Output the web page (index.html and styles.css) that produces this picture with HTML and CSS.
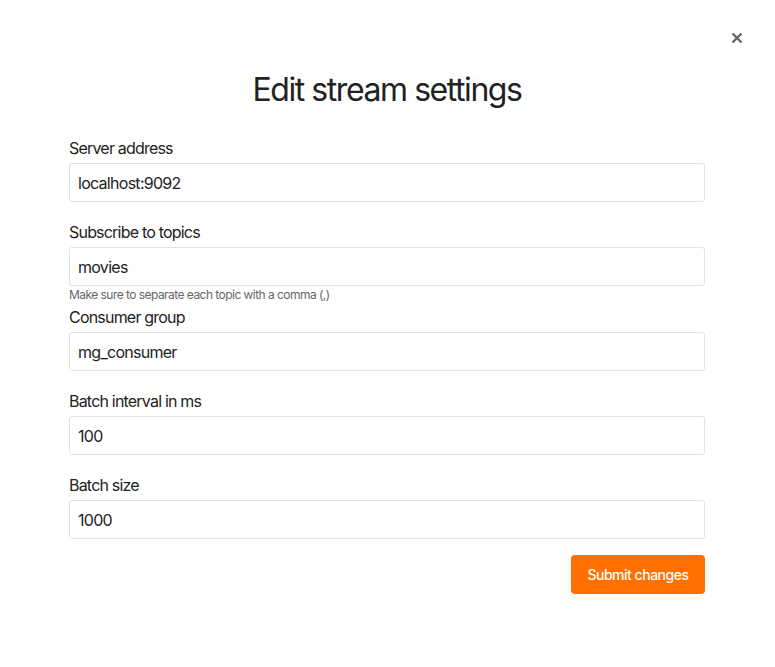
FILE: index.html
```html
<!DOCTYPE html>
<html lang="en">
<head>
<meta charset="utf-8">
<title>Edit stream settings</title>
<link rel="stylesheet" href="styles.css">
</head>
<body>
<div class="modal">
  <button class="close" aria-label="Close">
    <svg width="12" height="12" viewBox="0 0 12 12"><path d="M1.5 1.5 L10.5 10.5 M10.5 1.5 L1.5 10.5" stroke="#666" stroke-width="2.4" stroke-linecap="butt"/></svg>
  </button>
  <div class="content">
    <h1 class="title">Edit stream settings</h1>
    <form class="form">
      <div class="field">
        <label class="label">Server address</label>
        <input class="input" type="text" value="localhost:9092">
      </div>
      <div class="field field-help">
        <label class="label">Subscribe to topics</label>
        <input class="input" type="text" value="movies">
        <div class="help">Make sure to separate each topic with a comma (,)</div>
      </div>
      <div class="field">
        <label class="label">Consumer group</label>
        <input class="input" type="text" value="mg_consumer">
      </div>
      <div class="field">
        <label class="label">Batch interval in ms</label>
        <input class="input" type="text" value="100">
      </div>
      <div class="field field-last">
        <label class="label">Batch size</label>
        <input class="input" type="text" value="1000">
      </div>
      <div class="actions">
        <button type="button" class="submit">Submit changes</button>
      </div>
    </form>
  </div>
</div>
</body>
</html>
```
FILE: styles.css
```css
* { box-sizing: border-box; }
html, body { margin: 0; padding: 0; background: #fff; }
body { font-family: Inter, "Noto Sans", sans-serif; color: #222; }
.modal { position: relative; width: 775px; height: 667px; }
.close {
  position: absolute; top: 32px; right: 32px;
  width: 12px; height: 12px; padding: 0; border: 0; background: none;
  display: flex; cursor: pointer;
}
.content { width: 636px; margin: 0 0 0 69px; padding-top: 70px; }
.title {
  margin: 0 0 30px; font-size: 32px; font-weight: 400; line-height: normal;
  letter-spacing: -0.045em; text-align: center; color: #222;
}
.form { display: flex; flex-direction: column; }
.field { display: flex; flex-direction: column; margin-bottom: 21px; }
.field-help { margin-bottom: 6px; }
.field-last { margin-bottom: 16px; }
.label { font-size: 16px; line-height: 19px; margin-bottom: 5px; color: #222; letter-spacing: -0.05em; }
.input {
  height: 39px; width: 100%; border: 1px solid #e2e2e2; border-radius: 3px;
  padding: 0 8px; font: 16px Inter, sans-serif; letter-spacing: -0.045em; color: #222; outline: none;
}
.help { font-size: 12px; line-height: 15px; margin-top: 1px; color: #666; letter-spacing: -0.045em; }
.actions { display: flex; justify-content: flex-end; }
.submit {
  width: 134px; height: 39px; border: 0; border-radius: 4px;
  background: #ff7000; color: #fff; font: 500 14px Inter, sans-serif; letter-spacing: -0.035em;
}
```
